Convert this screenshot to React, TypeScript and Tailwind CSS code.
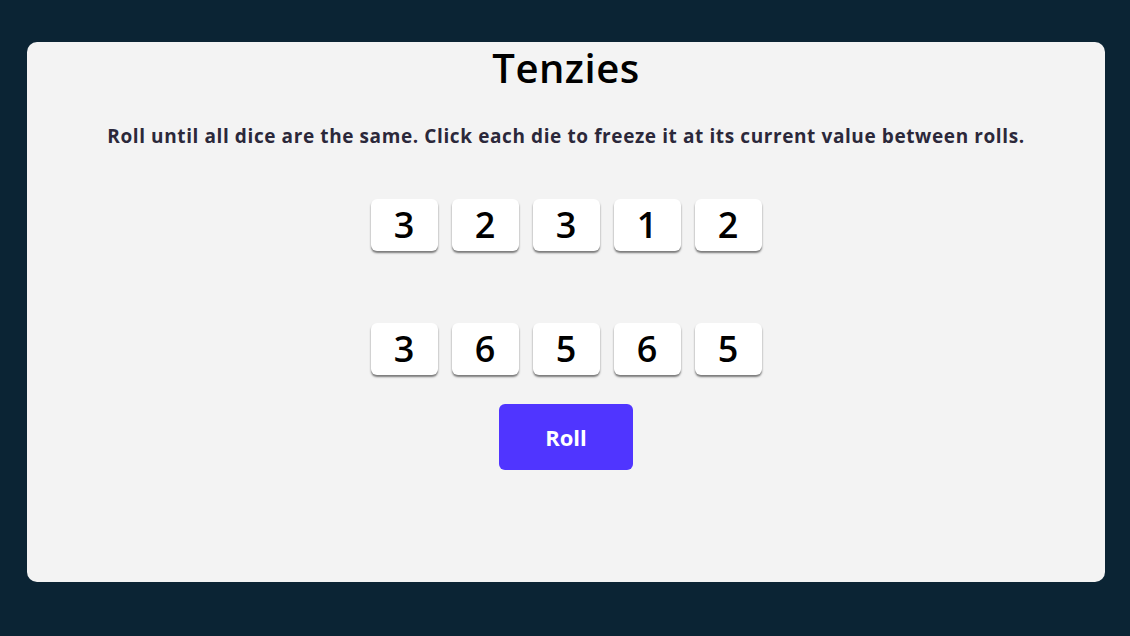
const top = [3, 2, 3, 1, 2];
const bottom = [3, 6, 5, 6, 5];

function Die({ value }: { value: number }) {
  return (
    <button className="w-[67px] h-[52px] bg-white rounded-md shadow-[0_2px_2px_rgba(0,0,0,0.5)] flex items-center justify-center text-[36px] font-semibold text-black leading-none">
      {value}
    </button>
  );
}

export default function App() {
  return (
    <div className="min-h-[636px] w-full bg-[#0b2434] pt-[42px] pl-[27px] pr-[25px] pb-[54px] flex" style={{ fontFamily: "'Open Sans', sans-serif" }}>
      <main className="flex-1 h-[540px] bg-[#f3f3f3] rounded-[10px] flex flex-col items-center">
        <h1 className="mt-0 text-[40px] font-semibold text-black leading-[52px] tracking-[0.5px]">Tenzies</h1>
        <p className="mt-[30px] text-[19px] font-bold text-[#2b283a] leading-6 tracking-[0.6px]">
          Roll until all dice are the same. Click each die to freeze it at its current value between rolls.
        </p>
        <div className="mt-[51px] flex gap-[14px]">
          {top.map((v, i) => (
            <Die key={i} value={v} />
          ))}
        </div>
        <div className="mt-[72px] flex gap-[14px]">
          {bottom.map((v, i) => (
            <Die key={i} value={v} />
          ))}
        </div>
        <button className="mt-[29px] w-[134px] h-[66px] bg-[#5035ff] rounded-md text-white text-[22px] font-bold">
          Roll
        </button>
      </main>
    </div>
  );
}
